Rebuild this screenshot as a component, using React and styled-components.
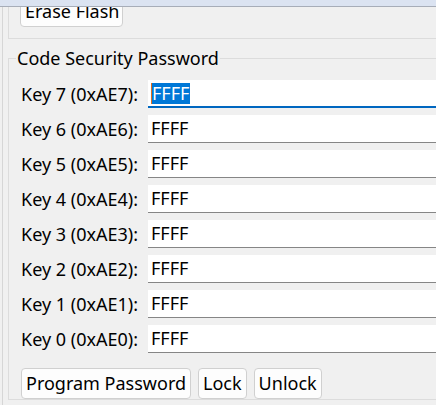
import React from "react";
import styled, { createGlobalStyle } from "styled-components";

const GlobalStyle = createGlobalStyle`
  html, body {
    margin: 0;
    padding: 0;
    background: #f0f0f0;
    overflow: hidden;
  }
  body {
    font-family: "Noto Sans", "Open Sans", sans-serif;
    font-size: 18px;
    color: #000;
  }
`;

const Window = styled.div`
  width: 436px;
  height: 405px;
  overflow: hidden;
`;

const TopStrip = styled.div`
  height: 6px;
  background: #dbe3f1;
  border-bottom: 1px solid #a7adb8;
`;

const Panel = styled.div`
  margin-left: 2px;
  border-left: 1px solid #d6d6d6;
  padding-left: 5px;
  height: 398px;
`;

const ClipGroup = styled.div`
  display: flex;
  align-items: flex-start;
  width: 460px;
  height: 32px;
  overflow: hidden;
  border-left: 1px solid #dcdcdc;
  border-bottom: 1px solid #dcdcdc;
  padding-left: 11px;
  box-sizing: border-box;
`;

const Button = styled.button`
  font: inherit;
  color: #000;
  height: 31px;
  padding: 0 4px;
  background: #fdfdfd;
  border: 1px solid #d0d0d0;
  border-radius: 4px;
  line-height: 29px;
  white-space: nowrap;
`;

const ClippedButton = styled(Button)`
  flex: none;
  margin-top: -11px;
  width: 103px;
`;

const Group = styled.fieldset`
  margin: 9px 0 0 0;
  width: 470px;
  border: 1px solid #dcdcdc;
  border-right: none;
  padding: 12px 0 0 12px;
  box-sizing: border-box;
`;

const Legend = styled.legend`
  padding: 0 1px;
  margin-left: -5px;
  line-height: 20px;
`;

const Rows = styled.div`
  display: grid;
  grid-template-columns: 127px 1fr;
  row-gap: 7px;
  align-items: center;
`;

const Label = styled.label`
  line-height: 28px;
  white-space: nowrap;
`;

const Field = styled.div`
  height: 28px;
  background: #fff;
  border-bottom: ${(p) => (p.focused ? "2px solid #0067c0" : "1px solid #868686")};
  box-sizing: border-box;
  padding-left: 3px;
  line-height: 27px;
  display: flex;
  align-items: center;
`;

const Selected = styled.span`
  background: #0078d7;
  color: #fff;
  line-height: 21px;
  padding: 0 1px 0 0;
  border-left: 1px solid #e07020;
`;

const ButtonRow = styled.div`
  display: flex;
  gap: 7px;
  margin-top: 15px;
`;

const keys = [7, 6, 5, 4, 3, 2, 1, 0];

export default function App() {
  return (
    <Window>
      <GlobalStyle />
      <TopStrip />
      <Panel>
        <ClipGroup>
          <ClippedButton>Erase Flash</ClippedButton>
        </ClipGroup>
        <Group>
          <Legend>Code Security Password</Legend>
          <Rows>
            {keys.map((k) => (
              <React.Fragment key={k}>
                <Label>{`Key ${k} (0xAE${k}):`}</Label>
                <Field focused={k === 7}>
                  {k === 7 ? <Selected>FFFF</Selected> : "FFFF"}
                </Field>
              </React.Fragment>
            ))}
          </Rows>
          <ButtonRow>
            <Button>Program Password</Button>
            <Button>Lock</Button>
            <Button>Unlock</Button>
          </ButtonRow>
        </Group>
      </Panel>
    </Window>
  );
}
